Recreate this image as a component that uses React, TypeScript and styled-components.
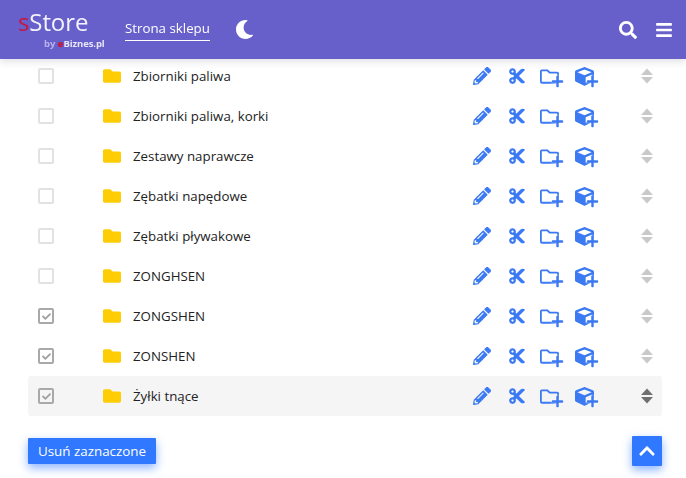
import React from "react";
import styled, { createGlobalStyle } from "styled-components";
import { FaPencilAlt, FaCut, FaRegFolder, FaPlus, FaCube, FaSearch, FaBars, FaMoon, FaFolder, FaChevronUp, FaCheck } from "react-icons/fa";

const Global = createGlobalStyle`
  html, body { margin: 0; padding: 0; background: #fff; height: 478px; overflow: hidden; }
  body { font-family: "Open Sans", "Noto Sans", sans-serif; color: #212529; }
  * { box-sizing: border-box; }
`;

const Page = styled.div`
  width: 686px;
  height: 478px;
  overflow: hidden;
  padding: 56px 24px 0 28px;
`;

const Header = styled.header`
  position: fixed;
  top: 0;
  left: 0;
  right: 0;
  height: 59px;
  z-index: 2;
  background: #675fca;
  box-shadow: 0 2px 8px rgba(60, 60, 90, 0.18);
  display: flex;
  align-items: center;
  padding: 0 13px 0 18px;
  color: #fff;
`;

const Logo = styled.div`
  width: 107px;
  height: 48px;
  margin-top: 4px;
`;

const LogoMain = styled.div`
  font-size: 24px;
  line-height: 28px;
  letter-spacing: -0.1px;
  color: #f4f3fc;
  span { color: #c8153f; }
`;

const LogoSub = styled.div`
  font-size: 9.5px;
  font-weight: 700;
  line-height: 12px;
  margin: 2px 0 0 26px;
  color: #e8e6f8;
  letter-spacing: -0.1px;
  i { font-style: normal; color: #b9b3ec; }
  b { color: #c8153f; }
`;

const NavLink = styled.a`
  font-size: 13.3px;
  line-height: 18px;
  padding-bottom: 3px;
  border-bottom: 1px solid #fff;
  margin-top: 1px;
`;

const Theme = styled.div`
  display: flex;
  margin: -1px 0 0 25px;
  font-size: 19px;
`;

const Spacer = styled.div`
  flex: 1;
`;

const HeaderIcon = styled.div`
  display: flex;
  font-size: 18px;
  margin-left: 18px;
`;

const Row = styled.div<{ $active?: boolean }>`
  height: 40px;
  display: flex;
  align-items: center;
  border-radius: 3px;
  background: ${(p) => (p.$active ? "#f5f5f5" : "transparent")};
`;

const Check = styled.div<{ $checked?: boolean }>`
  width: 16px;
  height: 16px;
  margin-left: 10px;
  border: 2px solid ${(p) => (p.$checked ? "#a9a9a9" : "#e2e2e2")};
  border-radius: 2px;
  display: flex;
  align-items: center;
  justify-content: center;
  color: #a0a0a0;
  font-size: 9px;
`;

const FolderMark = styled.div`
  display: flex;
  margin-left: 49px;
  color: #ffcd05;
  font-size: 18px;
  width: 18px;
`;

const Name = styled.div`
  margin-left: 12px;
  font-size: 13.3px;
  flex: 1;
  color: #222;
`;

const Tool = styled.div<{ $w: number }>`
  position: relative;
  width: ${(p) => p.$w}px;
  height: 20px;
  display: flex;
  align-items: center;
  color: #3b7af2;
`;

const PlusBadge = styled.span<{ $right: number }>`
  position: absolute;
  right: ${(p) => p.$right}px;
  bottom: -2px;
  display: flex;
  font-size: 13px;
  color: #3b7af2;
  filter: drop-shadow(0 0 1px #fff);
`;

const Sort = styled.svg<{ $active?: boolean }>`
  width: 12px;
  height: 16px;
  margin: 0 9px 0 42px;
  fill: ${(p) => (p.$active ? "#6f6f6f" : "#c9c9c9")};
`;

const Footer = styled.div`
  display: flex;
  justify-content: space-between;
  align-items: center;
  margin-top: 20px;
`;

const Danger = styled.button`
  width: 128px;
  height: 26px;
  border: 0;
  border-radius: 1px;
  padding: 0;
  background: #2f78ff;
  color: #fff;
  font-family: inherit;
  font-size: 13.4px;
  box-shadow: 0 4px 10px rgba(47, 120, 255, 0.55);
`;

const TopButton = styled.button`
  width: 30px;
  height: 30px;
  border: 0;
  border-radius: 1px;
  padding: 0;
  background: #2f78ff;
  color: #fff;
  display: flex;
  align-items: center;
  justify-content: center;
  font-size: 18px;
  box-shadow: 0 4px 10px rgba(47, 120, 255, 0.55);
`;

const rows = [
  ["Zbiorniki paliwa", false],
  ["Zbiorniki paliwa, korki", false],
  ["Zestawy naprawcze", false],
  ["Zębatki napędowe", false],
  ["Zębatki pływakowe", false],
  ["ZONGHSEN", false],
  ["ZONGSHEN", true],
  ["ZONSHEN", true],
  ["Żyłki tnące", true],
] as const;

export default function App() {
  return (
    <Page>
      <Global />
      <Header>
        <Logo>
          <LogoMain><span>s</span>Store</LogoMain>
          <LogoSub><i>by </i><b>e</b>Biznes.pl</LogoSub>
        </Logo>
        <NavLink>Strona sklepu</NavLink>
        <Theme><FaMoon /></Theme>
        <Spacer />
        <HeaderIcon><FaSearch /></HeaderIcon>
        <HeaderIcon><FaBars /></HeaderIcon>
      </Header>
      {rows.map(([name, checked], i) => (
        <Row key={name} $active={i === rows.length - 1}>
          <Check $checked={checked}>{checked && <FaCheck />}</Check>
          <FolderMark><FaFolder /></FolderMark>
          <Name>{name}</Name>
          <Tool $w={35}><FaPencilAlt size={18} /></Tool>
          <Tool $w={32}><FaCut size={18} /></Tool>
          <Tool $w={35}><FaRegFolder size={19} /><PlusBadge $right={11}><FaPlus /></PlusBadge></Tool>
          <Tool $w={24}><FaCube size={19} /><PlusBadge $right={0}><FaPlus /></PlusBadge></Tool>
          <Sort viewBox="0 0 12 16" $active={i === rows.length - 1}>
            <path d="M6 0.5 L12 7 H0 Z" />
            <path d="M0 9 H12 L6 15.5 Z" />
          </Sort>
        </Row>
      ))}
      <Footer>
        <Danger>Usuń zaznaczone</Danger>
        <TopButton><FaChevronUp /></TopButton>
      </Footer>
    </Page>
  );
}
